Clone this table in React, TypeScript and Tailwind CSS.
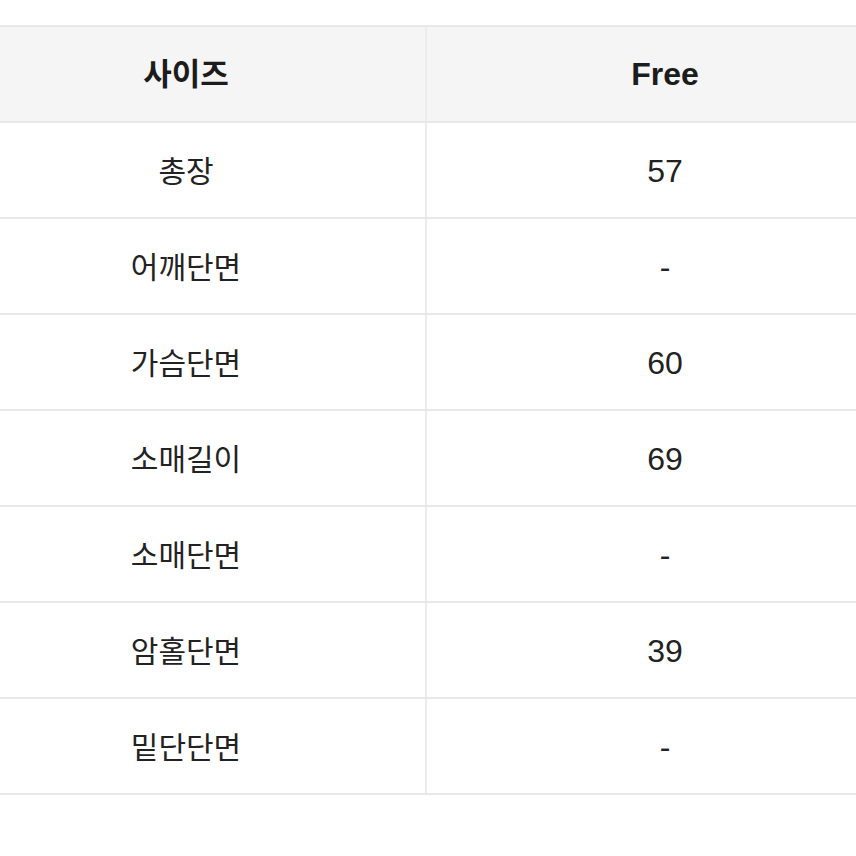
import React from 'react';

interface SizeRow {
  label: string;
  value: string;
}

const rows: SizeRow[] = [
  { label: '총장', value: '57' },
  { label: '어깨단면', value: '-' },
  { label: '가슴단면', value: '60' },
  { label: '소매길이', value: '69' },
  { label: '소매단면', value: '-' },
  { label: '암홀단면', value: '39' },
  { label: '밑단단면', value: '-' },
];

const font = "font-['Liberation_Sans','Noto_Sans_CJK_KR',sans-serif]";

const App: React.FC = () => {
  return (
    <div className="w-[856px] h-[856px] bg-white overflow-hidden pt-[25px]">
      <div className={`ml-[-53px] w-[956px] ${font} text-[#222]`}>
        {/* header */}
        <div className="flex h-[98px] border-t-2 border-b-2 border-[#e8e8e8] bg-[#f5f5f5]">
          <div className="w-[480px] flex items-center justify-center pt-[2px] text-[31px] font-semibold text-[#1c1c1c] border-r-2 border-[#ececec]">
            사이즈
          </div>
          <div className="flex-1 flex items-center justify-center text-[32px] font-bold text-[#1c1c1c]">
            Free
          </div>
        </div>

        {rows.map((row) => (
          <div key={row.label} className="flex h-[96px] border-b-2 border-[#e8e8e8]">
            <div className="w-[480px] flex items-center justify-center pt-[3px] text-[30px] border-r-2 border-[#ececec]">
              {row.label}
            </div>
            <div className="flex-1 flex items-center justify-center pt-[2px] text-[32px]">
              {row.value}
            </div>
          </div>
        ))}
      </div>
    </div>
  );
};

export default App;
